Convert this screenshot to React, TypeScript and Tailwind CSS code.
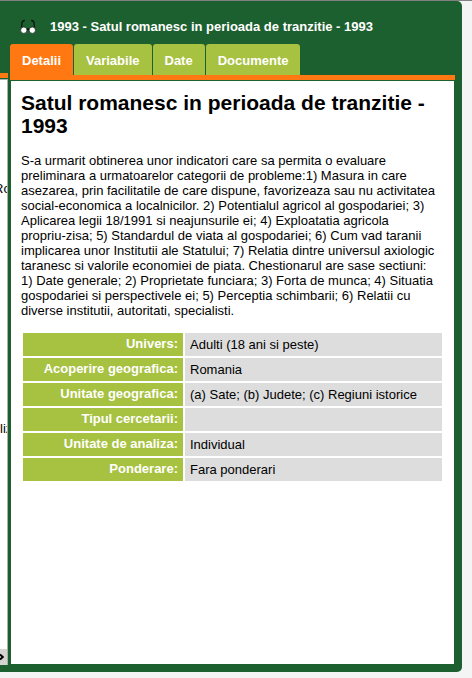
import React from "react";

const tabs = ["Detalii", "Variabile", "Date", "Documente"];

const rows = [
  ["Univers:", "Adulti (18 ani si peste)"],
  ["Acoperire geografica:", "Romania"],
  ["Unitate geografica:", "(a) Sate; (b) Judete; (c) Regiuni istorice"],
  ["Tipul cercetarii:", ""],
  ["Unitate de analiza:", "Individual"],
  ["Ponderare:", "Fara ponderari"],
];

function Glasses() {
  return (
    <svg className="h-4 w-4" viewBox="0 0 16 16" fill="none" aria-hidden="true">
      <path d="M1.3 11 2 5Q2.4 2.3 4.8 2.5M14.7 11 14 5Q13.6 2.3 11.2 2.5" stroke="#06140a" strokeWidth="1.3" />
      <path d="M6 11.6Q8 10.4 10 11.6" stroke="#06140a" strokeWidth="1.4" />
      <circle cx="3.8" cy="12.2" r="3.2" fill="#fff" stroke="#06140a" strokeWidth="0.7" />
      <circle cx="12.3" cy="12.2" r="3.2" fill="#fff" stroke="#06140a" strokeWidth="0.7" />
    </svg>
  );
}

/* Edge of the catalogue window that stays visible beside the dialog */
function CatalogueEdge() {
  return (
    <div className="flex w-2 shrink-0 flex-col overflow-hidden pt-[72px] pb-[7px]">
      <div className="h-[5px] shrink-0 bg-[#ff7811]" />
      <div className="mt-px flex grow flex-col overflow-hidden border-t border-r border-[#a8b0a8] bg-white whitespace-nowrap">
        <span className="-ml-[6px] mt-[101px]">Ro</span>
        <span className="mt-[225px]">liz</span>
        <button type="button" aria-label="Inainte" className="mt-auto flex h-4 w-2 items-center bg-[#d4d4d0]">
          <svg className="h-2 w-1" viewBox="0 0 4 8" fill="none" aria-hidden="true">
            <path d="M0 1.5 2.8 4 0 6.5" stroke="#000" strokeWidth="2" />
          </svg>
        </button>
      </div>
    </div>
  );
}

export default function App() {
  return (
    <div className="flex min-h-screen flex-col border-t border-[#808080] bg-[#f4f4f4] pr-[10px] pb-[6px] font-['Liberation_Sans',Arial,sans-serif] text-[13px] leading-[15px] text-black">
      <div className="flex grow rounded-r-[5px] bg-[#1d602f]">
        <CatalogueEdge />
        <section className="flex min-w-0 grow flex-col pr-[7px] pb-2 pl-[2px]">
          <header className="flex h-[43px] items-center gap-[14px] pt-[7px] pl-[10px] font-bold text-white">
            <Glasses />
            <span>1993 - Satul romanesc in perioada de tranzitie - 1993</span>
          </header>
          <nav className="flex gap-px border-b-[5px] border-[#ff7811]">
            {tabs.map((tab, i) => (
              <button
                key={tab}
                type="button"
                className={`h-[31px] rounded-t-[3px] px-3 pt-[2px] font-bold text-white ${i === 0 ? "bg-[#ff7811]" : "bg-[#a7c141]"}`}
              >
                {tab}
              </button>
            ))}
          </nav>
          <main className="mt-px mr-px ml-px grow bg-white px-[10px] pt-[10px]">
            <h1 className="text-[21px] leading-[23px] font-bold">
              Satul romanesc in perioada de tranzitie - 1993
            </h1>
            <p className="mt-4 pr-[7px]">
              S-a urmarit obtinerea unor indicatori care sa permita o evaluare preliminara a urmatoarelor categorii de
              probleme:1) Masura in care asezarea, prin facilitatile de care dispune, favorizeaza sau nu activitatea
              social-economica a localnicilor. 2) Potentialul agricol al gospodariei; 3) Aplicarea legii 18/1991 si
              neajunsurile ei; 4) Exploatatia agricola <span className="whitespace-nowrap">propriu-zisa;</span> 5)
              Standardul de viata al gospodariei; 6) Cum vad taranii implicarea unor Institutii ale Statului; 7) Relatia
              dintre universul axiologic taranesc si valorile economiei de piata. Chestionarul are sase sectiuni: 1)
              Date generale; 2) Proprietate funciara; 3) Forta de munca; 4) Situatia gospodariei si perspectivele ei; 5)
              Perceptia schimbarii; 6) Relatii cu diverse institutii, autoritati, specialisti.
            </p>
            <table className="mt-[13px] w-full border-separate border-spacing-[2px]">
              <tbody>
                {rows.map(([label, value]) => (
                  <tr key={label} className="h-[23px]">
                    <th scope="row" className="w-40 bg-[#a7c141] px-[5px] pt-[3px] pb-[5px] text-right align-top text-white">
                      {label}
                    </th>
                    <td className="bg-[#dddddd] px-[5px] py-1">{value}</td>
                  </tr>
                ))}
              </tbody>
            </table>
          </main>
        </section>
      </div>
    </div>
  );
}
